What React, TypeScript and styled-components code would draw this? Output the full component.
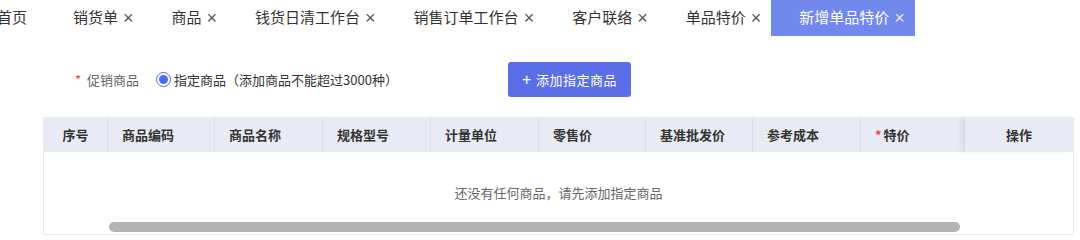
import styled, { createGlobalStyle } from 'styled-components'

const GlobalStyle = createGlobalStyle`
  body {
    margin: 0;
    background: #fff;
    font-family: "Noto Sans CJK SC", "Liberation Sans", sans-serif;
    color: #333;
  }
`

const Page = styled.div`
  width: 1080px;
  height: 240px;
  overflow: hidden;
`

const TabBar = styled.div`
  display: flex;
  height: 36px;
  margin-left: -31px;
  white-space: nowrap;
`

const Tab = styled.div<{ $active?: boolean; $closable?: boolean }>`
  display: flex;
  align-items: center;
  height: 36px;
  padding: 0 ${(p) => (p.$closable ? 10 : 18)}px 4px 28px;
  box-sizing: border-box;
  font-size: 15px;
  color: ${(p) => (p.$active ? '#fff' : '#333')};
  background: ${(p) => (p.$active ? '#7189ec' : 'transparent')};
`

const Close = styled.span<{ $active?: boolean }>`
  margin: 4px 0 0 5px;
  font-family: "Liberation Sans", sans-serif;
  font-size: 18px;
  line-height: 18px;
  color: ${(p) => (p.$active ? 'rgba(255,255,255,0.8)' : '#555')};
`

const FormRow = styled.div`
  display: flex;
  align-items: center;
  margin-top: 26px;
  padding-left: 75px;
  height: 35px;
  font-size: 13px;
`

const Star = styled.span<{ $tight?: boolean }>`
  color: #f0433a;
  font-size: 13px;
  margin-right: ${(p) => (p.$tight ? 2 : 6)}px;
`

const Label = styled.span`
  color: #666;
`

const Radio = styled.span`
  display: inline-flex;
  align-items: center;
  justify-content: center;
  width: 15px;
  height: 15px;
  box-sizing: border-box;
  border: 1px solid #4d6cf0;
  border-radius: 50%;
  margin: 0 3px 0 17px;

  &::after {
    content: '';
    width: 9px;
    height: 9px;
    border-radius: 50%;
    background: #4d6cf0;
  }
`

const RadioText = styled.span`
  color: #333;
`

const AddButton = styled.button`
  display: flex;
  align-items: center;
  justify-content: center;
  margin-left: 110px;
  width: 123px;
  height: 35px;
  border: none;
  border-radius: 3px;
  background: #5a6fe7;
  color: #fff;
  font-family: inherit;
  font-size: 13px;
  letter-spacing: 0.5px;
  padding: 0;
`

const Plus = styled.span`
  font-family: "Liberation Sans", sans-serif;
  font-size: 16px;
  margin-right: 4px;
`

const Table = styled.div`
  margin: 20px 0 0 43px;
  width: 1031px;
  border: 1px solid #e9e9ee;
  border-top: none;
  box-sizing: border-box;
`

const columns = '63px 107px 108px 108px 108px 107px 107px 108px 104px 109px'

const HeaderRow = styled.div`
  display: grid;
  grid-template-columns: ${columns};
  height: 35px;
  background: #e9ebf4;
`

const HeaderCell = styled.div<{ $center?: boolean; $fixed?: boolean }>`
  display: flex;
  align-items: center;
  justify-content: ${(p) => (p.$center ? 'center' : 'flex-start')};
  padding-left: ${(p) => (p.$center ? 0 : 14)}px;
  font-size: 13px;
  font-weight: bold;
  color: #333;
  border-left: 1px solid ${(p) => (p.$fixed ? '#d6d9e4' : '#dde0ea')};
  box-shadow: ${(p) => (p.$fixed ? '-3px 0 4px rgba(0, 0, 0, 0.06)' : 'none')};

  &:first-child {
    border-left: none;
  }
`

const Body = styled.div`
  display: flex;
  flex-direction: column;
  height: 82px;
  box-sizing: border-box;
  padding-top: 31px;
`

const Empty = styled.div`
  text-align: center;
  font-size: 13px;
  line-height: 20px;
  color: #666;
`

const Track = styled.div`
  margin-top: 19px;
  padding-left: 65px;
`

const Thumb = styled.div`
  width: 851px;
  height: 10px;
  border-radius: 5px;
  background: #b3b3b3;
`

const tabs = ['销货单', '商品', '钱货日清工作台', '销售订单工作台', '客户联络', '单品特价']

const headers = ['商品编码', '商品名称', '规格型号', '计量单位', '零售价', '基准批发价', '参考成本']

const App = () => (
  <Page>
    <GlobalStyle />
    <TabBar>
      <Tab>首页</Tab>
      {tabs.map((t) => (
        <Tab key={t} $closable>
          {t}
          <Close>×</Close>
        </Tab>
      ))}
      <Tab $active $closable>
        新增单品特价
        <Close $active>×</Close>
      </Tab>
    </TabBar>

    <FormRow>
      <Star>*</Star>
      <Label>促销商品</Label>
      <Radio />
      <RadioText>指定商品（添加商品不能超过3000种）</RadioText>
      <AddButton>
        <Plus>+</Plus>添加指定商品
      </AddButton>
    </FormRow>

    <Table>
      <HeaderRow>
        <HeaderCell $center>序号</HeaderCell>
        {headers.map((h) => (
          <HeaderCell key={h}>{h}</HeaderCell>
        ))}
        <HeaderCell>
          <Star $tight>*</Star>特价
        </HeaderCell>
        <HeaderCell $center $fixed>
          操作
        </HeaderCell>
      </HeaderRow>
      <Body>
        <Empty>还没有任何商品，请先添加指定商品</Empty>
        <Track>
          <Thumb />
        </Track>
      </Body>
    </Table>
  </Page>
)

export default App
